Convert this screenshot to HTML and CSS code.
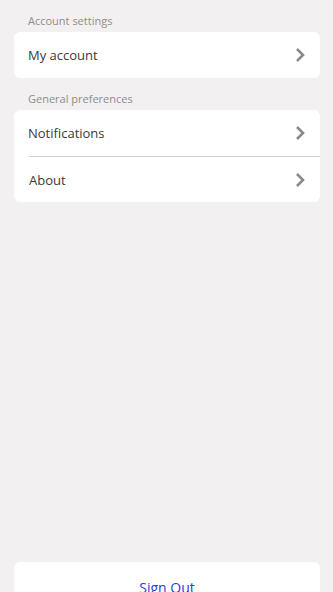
FILE: index.html
```html
<!DOCTYPE html>
<html lang="en">
<head>
    <meta charset="UTF-8">
    <meta name="viewport" content="width=device-width, initial-scale=1.0">
    <title>Settings</title>
    <link rel="stylesheet" href="styles.css">
</head>
<body>
    <main class="settings">
        <h2 class="section-label">Account settings</h2>
        <div class="card">
            <div class="row">
                <span>My account</span>
                <svg class="chevron" viewBox="0 0 12 16" width="12" height="16"><path d="M3 2 L9 8 L3 14" /></svg>
            </div>
        </div>

        <h2 class="section-label">General preferences</h2>
        <div class="card">
            <div class="row">
                <span>Notifications</span>
                <svg class="chevron" viewBox="0 0 12 16" width="12" height="16"><path d="M3 2 L9 8 L3 14" /></svg>
            </div>
            <div class="row row-split">
                <span>About</span>
                <svg class="chevron" viewBox="0 0 12 16" width="12" height="16"><path d="M3 2 L9 8 L3 14" /></svg>
            </div>
        </div>

        <!-- Sign out sits at the bottom -->
        <div class="card sign-out">
            <button class="sign-out-btn">Sign Out</button>
        </div>
    </main>
</body>
</html>
```

FILE: styles.css
```css
body {
    font-family: "Open Sans", Arial, sans-serif;
    margin: 0;
    padding: 0;
    background-color: #f2f0f1;
    overflow: hidden;
}

.settings {
    padding: 0 13px 0 14px;
}

.section-label {
    margin: 0;
    padding: 14px 14px 4px;
    font-size: 11px;
    line-height: 14px;
    font-weight: normal;
    color: #8e8e8e;
}

.card {
    background-color: #fff;
    border-radius: 6px;
    overflow: hidden;
}

.row {
    display: flex;
    align-items: center;
    justify-content: space-between;
    height: 46px;
    box-sizing: border-box;
    padding: 0 14px 0 14px;
    font-size: 13px;
    color: #3a3a3a;
}

.row-split {
    border-top: 1px solid #d3d3d7;
    margin-left: 15px;
    padding-left: 0;
}

.chevron {
    fill: none;
    stroke: #8a8a8a;
    stroke-width: 2.6;
}

.sign-out {
    margin-top: 360px;
    height: 50px;
}

.sign-out-btn {
    display: block;
    width: 100%;
    height: 100%;
    border: none;
    background: none;
    padding-top: 2px;
    font-family: "Open Sans", Arial, sans-serif;
    font-size: 14px;
    color: #2b3ddb;
    cursor: pointer;
}
```
